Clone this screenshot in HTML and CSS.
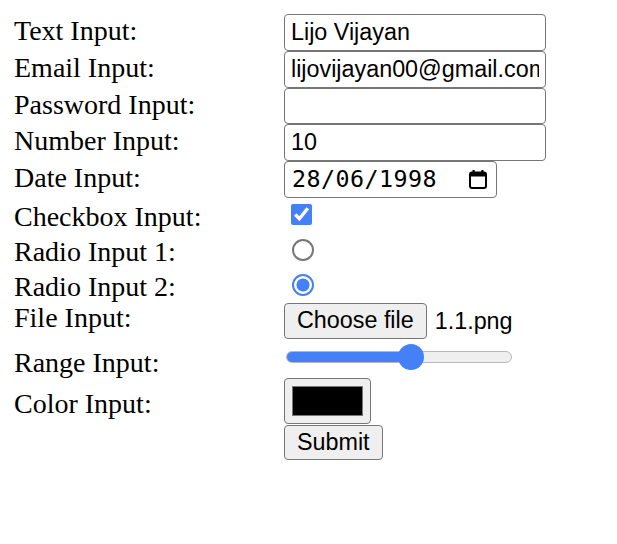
FILE: index.html
```html
<!DOCTYPE html>
<html lang="en">
<head>
<meta charset="utf-8">
<title>Form Inputs</title>
<link rel="stylesheet" href="styles.css">
</head>
<body>
<form class="form">
  <div class="row row-field">
    <label class="label" for="txt">Text Input:</label>
    <input id="txt" class="field" type="text" value="Lijo Vijayan">
  </div>
  <div class="row row-field">
    <label class="label" for="mail">Email Input:</label>
    <input id="mail" class="field" type="text" value="lijovijayan00@gmail.com">
  </div>
  <div class="row row-field">
    <label class="label" for="pw">Password Input:</label>
    <input id="pw" class="field" type="password" value="">
  </div>
  <div class="row row-field">
    <label class="label" for="num">Number Input:</label>
    <input id="num" class="field" type="text" value="10">
  </div>
  <div class="row row-field">
    <label class="label">Date Input:</label>
    <div class="date-field">
      <span class="date-text">28/06/1998</span>
      <svg class="cal" width="18" height="19" viewBox="0 0 18 19" aria-hidden="true">
        <rect x="3.5" y="0" width="2.2" height="4" fill="#000"/>
        <rect x="12.3" y="0" width="2.2" height="4" fill="#000"/>
        <rect x="1" y="2.5" width="16" height="15.5" rx="2" fill="none" stroke="#000" stroke-width="2"/>
        <rect x="1" y="2.5" width="16" height="4" fill="#000"/>
      </svg>
    </div>
  </div>
  <div class="row row-check">
    <label class="label" for="chk">Checkbox Input:</label>
    <input id="chk" class="check" type="checkbox" checked>
  </div>
  <div class="row row-radio">
    <label class="label" for="r1">Radio Input 1:</label>
    <input id="r1" class="radio" type="radio" name="r">
  </div>
  <div class="row row-radio">
    <label class="label" for="r2">Radio Input 2:</label>
    <input id="r2" class="radio" type="radio" name="r" checked>
  </div>
  <div class="row row-file">
    <label class="label">File Input:</label>
    <div class="file">
      <button type="button" class="btn">Choose file</button>
      <span class="file-name">1.1.png</span>
    </div>
  </div>
  <div class="row row-range">
    <label class="label" for="rng">Range Input:</label>
    <input id="rng" class="range" type="range" min="0" max="100" value="56" style="--fill: 55.3%">
  </div>
  <div class="row row-color">
    <label class="label" for="clr">Color Input:</label>
    <input id="clr" class="color" type="color" value="#000000">
  </div>
  <div class="row row-submit">
    <span class="label"></span>
    <button type="submit" class="btn btn-submit">Submit</button>
  </div>
</form>
</body>
</html>
```
FILE: styles.css
```css
* {
  box-sizing: border-box;
}

body {
  margin: 14px;
  background: #fff;
  color: #000;
  font-family: "Liberation Serif", "Times New Roman", serif;
  font-size: 28px;
}

.form {
  display: flex;
  flex-direction: column;
}

.row {
  display: flex;
  align-items: flex-start;
}

.label {
  flex: none;
  width: 270px;
  line-height: 31px;
}

.field,
.date-field {
  height: 36.75px;
  border: 1px solid #767676;
  border-radius: 4px;
  background: #fff;
  color: #000;
  font-family: "Liberation Sans", Arial, sans-serif;
  font-size: 23.33px;
  margin: 0;
}

.field {
  width: 262px;
  padding: 0 6px;
  outline: none;
}

.date-field {
  width: 213px;
  padding: 0 9px 0 7px;
  display: flex;
  align-items: center;
  justify-content: space-between;
}

.date-text {
  font-family: "DejaVu Sans Mono", "Liberation Mono", monospace;
  font-size: 23.33px;
  letter-spacing: 0.45px;
  line-height: 1;
}

.cal {
  display: block;
}

.row-field .label {
  margin-top: 1px;
}

.row-check .label {
  margin-top: 3.25px;
}

.check {
  margin: 6.25px 0 0 7px;
  width: 21px;
  height: 21px;
  accent-color: #4480f7;
}

.row-radio .label {
  margin-top: 4px;
}

.radio {
  -webkit-appearance: none;
  appearance: none;
  margin: 6.5px 0 0 8px;
  width: 22px;
  height: 22px;
  border: 2px solid #767676;
  border-radius: 50%;
  background: #fff;
}

.radio:checked {
  border-color: #4480f7;
  background: radial-gradient(circle, #4480f7 0, #4480f7 6.2px, #fff 6.8px);
}

.file {
  display: flex;
  align-items: center;
  margin-top: 1px;
}

.btn {
  height: 36px;
  margin: 0;
  padding: 0 12px;
  border: 1px solid #767676;
  border-radius: 4px;
  background: #efefef;
  color: #000;
  font-family: "Liberation Sans", Arial, sans-serif;
  font-size: 23.33px;
  line-height: 1;
}

.file-name {
  margin-left: 8px;
  font-family: "Liberation Sans", Arial, sans-serif;
  font-size: 23.33px;
}

.row-range .label {
  margin-top: 8px;
}

.range {
  -webkit-appearance: none;
  appearance: none;
  width: 226px;
  height: 26px;
  margin: 5px 0 0 2px;
  padding: 0;
  background: transparent;
}

.range::-webkit-slider-runnable-track {
  box-sizing: border-box;
  height: 12px;
  border: 1px solid #b8b8b8;
  border-radius: 6px;
  background: linear-gradient(to right, #4480f7 0, #4480f7 var(--fill), #efefef var(--fill), #efefef 100%);
}

.range::-webkit-slider-thumb {
  -webkit-appearance: none;
  appearance: none;
  width: 26px;
  height: 26px;
  margin-top: -8px;
  border: none;
  border-radius: 50%;
  background: #4480f7;
}

.row-color .label {
  margin-top: 10px;
}

.color {
  -webkit-appearance: none;
  appearance: none;
  width: 87px;
  height: 46px;
  margin: 0;
  padding: 7px;
  border: 1px solid #767676;
  border-radius: 4px;
  background: #efefef;
}

.color::-webkit-color-swatch-wrapper {
  padding: 0;
}

.color::-webkit-color-swatch {
  border: 1px solid #777;
  border-radius: 0;
}

.btn-submit {
  height: 35px;
  margin-top: 1px;
}
```
